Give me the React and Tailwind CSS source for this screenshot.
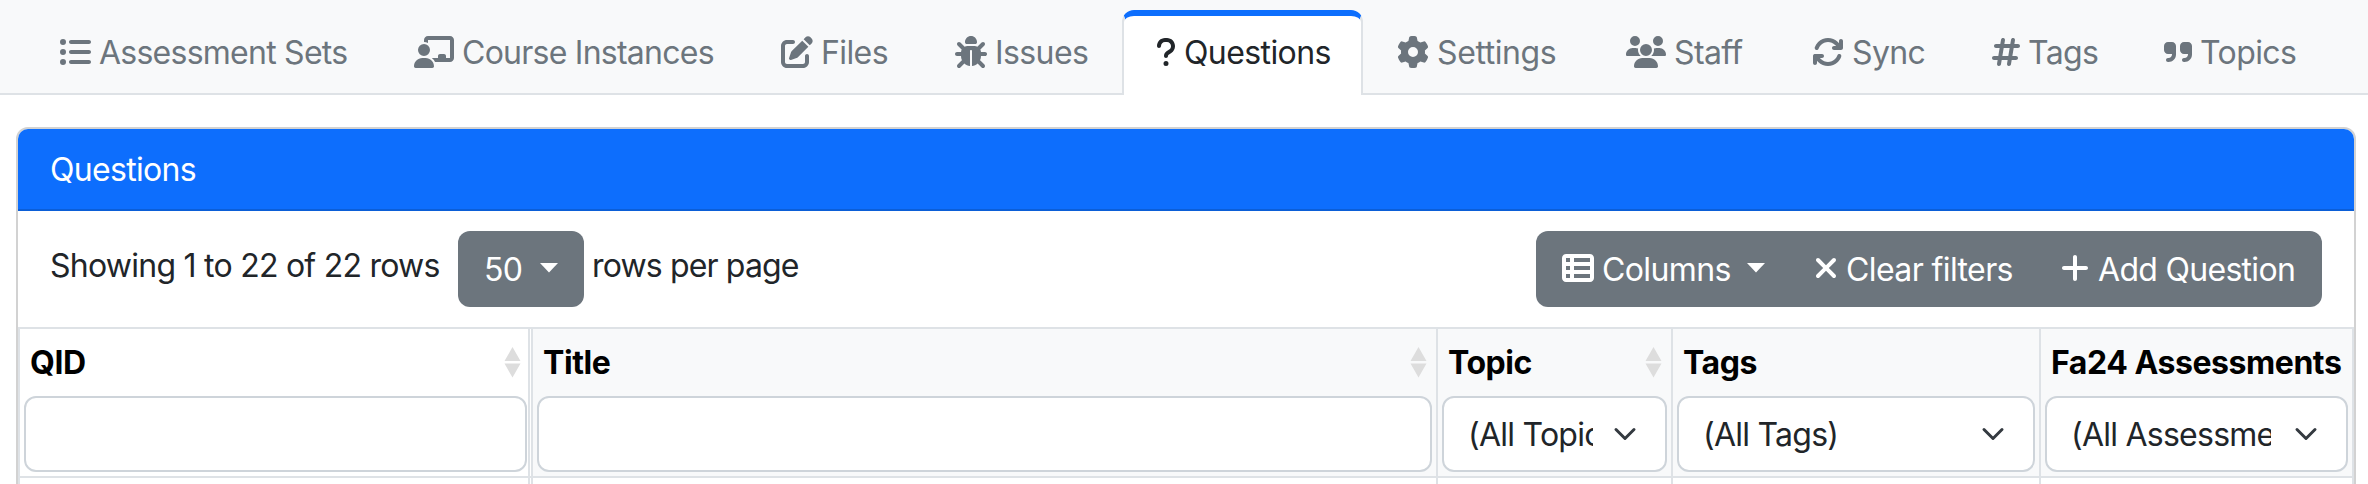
import {
  FaListUl, FaChalkboardUser, FaPenToSquare, FaBug, FaQuestion, FaGear,
  FaArrowsRotate, FaHashtag, FaQuoteRight, FaTableList, FaXmark, FaPlus,
} from "react-icons/fa6";

function UsersIcon({ className }) {
  return (
    <svg viewBox="0 0 640 512" className={className} fill="currentColor">
      <path d="M144 0a80 80 0 1 1 0 160A80 80 0 1 1 144 0zM512 0a80 80 0 1 1 0 160A80 80 0 1 1 512 0zM0 298.7C0 239.8 47.8 192 106.7 192h42.7c15.9 0 31 3.5 44.6 9.7c-1.3 7.2-1.9 14.7-1.9 22.3c0 38.2 16.8 72.5 43.3 96c-.2 0-.4 0-.7 0H21.3C9.6 320 0 310.4 0 298.7zM405.3 320c-.2 0-.4 0-.7 0c26.6-23.5 43.3-57.8 43.3-96c0-7.6-.7-15-1.9-22.3c13.6-6.3 28.7-9.7 44.6-9.7h42.7C592.2 192 640 239.8 640 298.7c0 11.8-9.6 21.3-21.3 21.3H405.3zM224 224a96 96 0 1 1 192 0 96 96 0 1 1-192 0zM128 485.3C128 411.7 187.7 352 261.3 352H378.7C452.3 352 512 411.7 512 485.3c0 14.7-11.9 26.7-26.7 26.7H154.7c-14.7 0-26.7-11.9-26.7-26.7z" />
    </svg>
  );
}

const TABS = [
  { label: "Assessment Sets", Icon: FaListUl, icon: "w-[32px]", text: "w-[247px] tracking-[-0.75px]" },
  { label: "Course Instances", Icon: FaChalkboardUser, icon: "w-[40px]", text: "w-[251px] tracking-[-0.75px]" },
  { label: "Files", Icon: FaPenToSquare, icon: "w-[32px]", text: "w-[66px]" },
  { label: "Issues", Icon: FaBug, icon: "w-[32px]", text: "w-[93px]" },
  { label: "Questions", Icon: FaQuestion, icon: "w-[20px]", text: "w-[145px]", active: true },
  { label: "Settings", Icon: FaGear, icon: "w-[32px]", text: "w-[121px] tracking-[-0.4px]" },
  { label: "Staff", Icon: UsersIcon, icon: "w-[40px]", text: "w-[70px]" },
  { label: "Sync", Icon: FaArrowsRotate, icon: "w-[32px]", text: "w-[72px]" },
  { label: "Tags", Icon: FaHashtag, icon: "w-[28px]", text: "w-[68px]" },
  { label: "Topics", Icon: FaQuoteRight, icon: "w-[28px]", text: "w-[94px]" },
];

function Tab({ label, Icon, icon, text, active }) {
  return (
    <a
      className={
        "flex shrink-0 items-start rounded-t-[12px] border-x-2 border-t-[6px] px-[32px] pt-[20px] " +
        (active
          ? "h-[85px] border-x-[#dee2e6] border-t-[#0d6efd] bg-white text-[#212529]"
          : "h-[83px] border-transparent text-[#6c757d]")
      }
    >
      <Icon className={"mr-[8px] h-[32px] shrink-0 " + icon} />
      <span className={"whitespace-nowrap leading-[34px] " + text}>{label}</span>
    </a>
  );
}

function Caret() {
  return (
    <svg viewBox="0 0 18 10" className="-mt-[2px] h-[10px] w-[18px] shrink-0 fill-white">
      <path d="M0 0H18L9 9.6Z" />
    </svg>
  );
}

function SortIcon() {
  return (
    <svg viewBox="0 0 17 31" className="h-[31px] w-[17px] fill-[#dddddd]">
      <path d="M8.5 0L16.5 14H.5ZM.5 16.5H16.5L8.5 30.5Z" />
    </svg>
  );
}

function Select({ children, text }) {
  return (
    <div className="flex h-[76px] items-center justify-between rounded-[12px] border-2 border-[#ced4da] bg-white pl-[24px] pr-[28px] pt-[2px] tracking-[-0.75px] text-[#212529]">
      <span className={"overflow-hidden whitespace-nowrap " + text}>{children}</span>
      <svg viewBox="0 0 16 16" className="-mt-[2px] h-[24px] w-[24px] shrink-0 fill-none stroke-[#343a40]" strokeWidth="2" strokeLinecap="round" strokeLinejoin="round">
        <path d="m2 5 6 6 6-6" />
      </svg>
    </div>
  );
}

function HeaderCell({ title, width, sort, frozen, children }) {
  return (
    <div className={"flex shrink-0 flex-col border-[#dee2e6] pl-[4px] " + width + (frozen ? " bg-white pr-px" : " bg-[#f8f9fa] pr-[4px]")}>
      <div className={"flex h-[67px] items-center justify-between pl-[6px] font-bold tracking-[-0.45px] text-black " + (frozen ? "pr-[6px]" : "pr-[5px]")}>
        <span className="whitespace-nowrap">{title}</span>
        {sort && <SortIcon />}
      </div>
      {children}
    </div>
  );
}

const Input = () => <div className="h-[76px] rounded-[12px] border-2 border-[#ced4da] bg-white" />;

export default function App() {
  return (
    <div className="h-[484px] w-[2368px] overflow-hidden bg-white font-['Inter',sans-serif] text-[32px] leading-[48px] tracking-[-0.6px] text-[#212529]">
      <nav className="flex h-[95px] items-start bg-[#f8f9fa] bg-[linear-gradient(#dee2e6,#dee2e6)] bg-[length:100%_2px] bg-bottom bg-no-repeat pl-[25px] pt-[10px]">
        {TABS.map((t) => <Tab key={t.label} {...t} />)}
      </nav>
      <main className="ml-[16px] mt-[32px] h-[400px] w-[2340px] overflow-hidden rounded-t-[12px] border-2 border-[#d2d2d2]">
        <div className="h-[82px] border-b-2 border-[#0b5ed7] bg-[#0d6efd] px-[32px] pt-[17px] tracking-[-0.7px] text-white">Questions</div>
        <div className="flex h-[116px] items-start justify-between px-[32px] pt-[20px]">
          <div className="flex">
            <span className="w-[408px] whitespace-nowrap pt-[11px] tracking-[-0.75px]">Showing 1 to 22 of 22 rows</span>
            <button className="flex h-[76px] w-[126px] items-center rounded-[12px] bg-[#6c757d] pl-[26px] text-white">
              <span className="w-[56px] pt-[2px] text-left">50</span>
              <Caret />
            </button>
            <span className="ml-[8px] pt-[11px] tracking-[-0.85px]">rows per page</span>
          </div>
          <div className="flex h-[76px] w-[786px] items-center rounded-[12px] bg-[#6c757d] pl-[26px] text-white">
            <FaTableList className="-mt-[2px] mr-[8px] h-[32px] w-[32px] shrink-0" />
            <span className="w-[145px] pt-[2px]">Columns</span>
            <Caret />
            <FaXmark className="-mt-[2px] ml-[49px] mr-[8px] h-[32px] w-[24px] shrink-0" />
            <span className="w-[215px] whitespace-nowrap pt-[2px]">Clear filters</span>
            <FaPlus className="-mt-[2px] mr-[9px] h-[32px] w-[28px] shrink-0" />
            <span className="whitespace-nowrap pt-[2px] tracking-[-0.7px]">Add Question</span>
          </div>
        </div>
        <div className="flex h-[151px] border-2 border-[#dee2e6]">
          <HeaderCell title="QID" width="w-[510px] border-r-2" sort frozen><Input /></HeaderCell>
          <HeaderCell title="Title" width="ml-px w-[907px] border-x-2" sort><Input /></HeaderCell>
          <HeaderCell title="Topic" width="w-[235px] border-r-2" sort><Select text="w-[125px]">(All Topics)</Select></HeaderCell>
          <HeaderCell title="Tags" width="w-[368px] border-r-2"><Select text="w-[250px]">(All Tags)</Select></HeaderCell>
          <HeaderCell title="Fa24 Assessments" width="w-[311px]"><Select text="w-[200px]">(All Assessments)</Select></HeaderCell>
        </div>
        <div className="flex h-[60px] border-x-2 border-[#dee2e6]">
          <div className="w-[510px] border-r-2 border-[#dee2e6]" />
          <div className="ml-px w-[907px] border-x-2 border-[#dee2e6]" />
          <div className="w-[235px] border-r-2 border-[#dee2e6]" />
          <div className="w-[368px] border-r-2 border-[#dee2e6]" />
        </div>
      </main>
    </div>
  );
}
